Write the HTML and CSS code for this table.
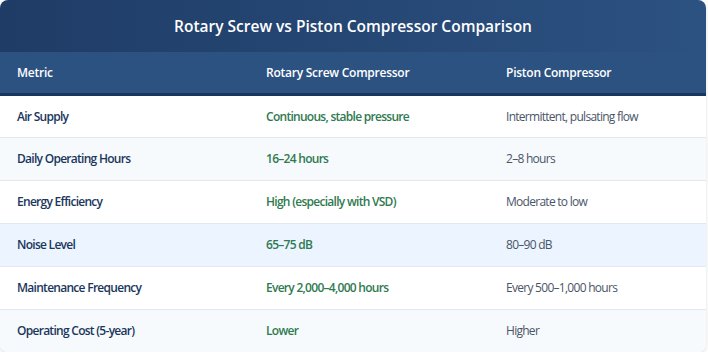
FILE: index.html
```html
<!DOCTYPE html>
<html lang="en">
<head>
<meta charset="utf-8">
<title>Rotary Screw vs Piston Compressor Comparison</title>
<link rel="stylesheet" href="styles.css">
</head>
<body>
<div class="card">
  <h2 class="title">Rotary Screw vs Piston Compressor Comparison</h2>
  <table class="cmp">
    <thead>
      <tr>
        <th class="c1">Metric</th>
        <th class="c2">Rotary Screw Compressor</th>
        <th class="c3">Piston Compressor</th>
      </tr>
    </thead>
    <tbody>
      <tr>
        <td class="metric">Air Supply</td>
        <td class="good">Continuous, stable pressure</td>
        <td class="plain">Intermittent, pulsating flow</td>
      </tr>
      <tr class="alt">
        <td class="metric">Daily Operating Hours</td>
        <td class="good">16–24 hours</td>
        <td class="plain">2–8 hours</td>
      </tr>
      <tr>
        <td class="metric">Energy Efficiency</td>
        <td class="good">High (especially with VSD)</td>
        <td class="plain">Moderate to low</td>
      </tr>
      <tr class="hl">
        <td class="metric">Noise Level</td>
        <td class="good">65–75 dB</td>
        <td class="plain">80–90 dB</td>
      </tr>
      <tr>
        <td class="metric">Maintenance Frequency</td>
        <td class="good">Every 2,000–4,000 hours</td>
        <td class="plain">Every 500–1,000 hours</td>
      </tr>
      <tr class="alt last">
        <td class="metric">Operating Cost (5-year)</td>
        <td class="good">Lower</td>
        <td class="plain">Higher</td>
      </tr>
    </tbody>
  </table>
</div>
</body>
</html>
```
FILE: styles.css
```css
html, body {
  margin: 0;
  padding: 0;
  background: #ffffff;
}
body {
  font-family: "Open Sans", "Noto Sans", sans-serif;
}
.card {
  width: 706px;
  border-radius: 8px;
  overflow: hidden;
  background: #ffffff;
  box-shadow: 0 2px 4px rgba(0, 0, 0, 0.12);
}
.title {
  margin: 0;
  height: 52px;
  display: flex;
  align-items: center;
  justify-content: center;
  color: #ffffff;
  font-size: 15.5px;
  font-weight: 600;
  background: linear-gradient(90deg, #1f3c66 0%, #2c5282 100%);
}
.cmp {
  width: 100%;
  border-collapse: collapse;
  table-layout: fixed;
}
.cmp th {
  background: #2c5282;
  color: #ffffff;
  text-align: left;
  font-size: 12px;
  letter-spacing: -0.25px;
  font-weight: 600;
  height: 42px;
  padding: 0 17px;
  border-bottom: 3px solid #1a365d;
  box-sizing: border-box;
}
.c1 { width: 249px; }
.c2 { width: 240px; }
.cmp td {
  height: 43px;
  padding: 0 17px;
  font-size: 12px;
  letter-spacing: -0.72px;
  border-bottom: 1px solid #e2e8f0;
  box-sizing: border-box;
}
.cmp tr.last td { border-bottom: none; }
.cmp tr.alt td { background: #f7fafc; }
.cmp tr.hl td { background: #ebf4ff; }
.metric {
  color: #1a365d;
  font-weight: 600;
}
.good {
  color: #2f7a50;
  font-weight: 600;
}
.plain {
  color: #4a5568;
  font-weight: 400;
}
```
